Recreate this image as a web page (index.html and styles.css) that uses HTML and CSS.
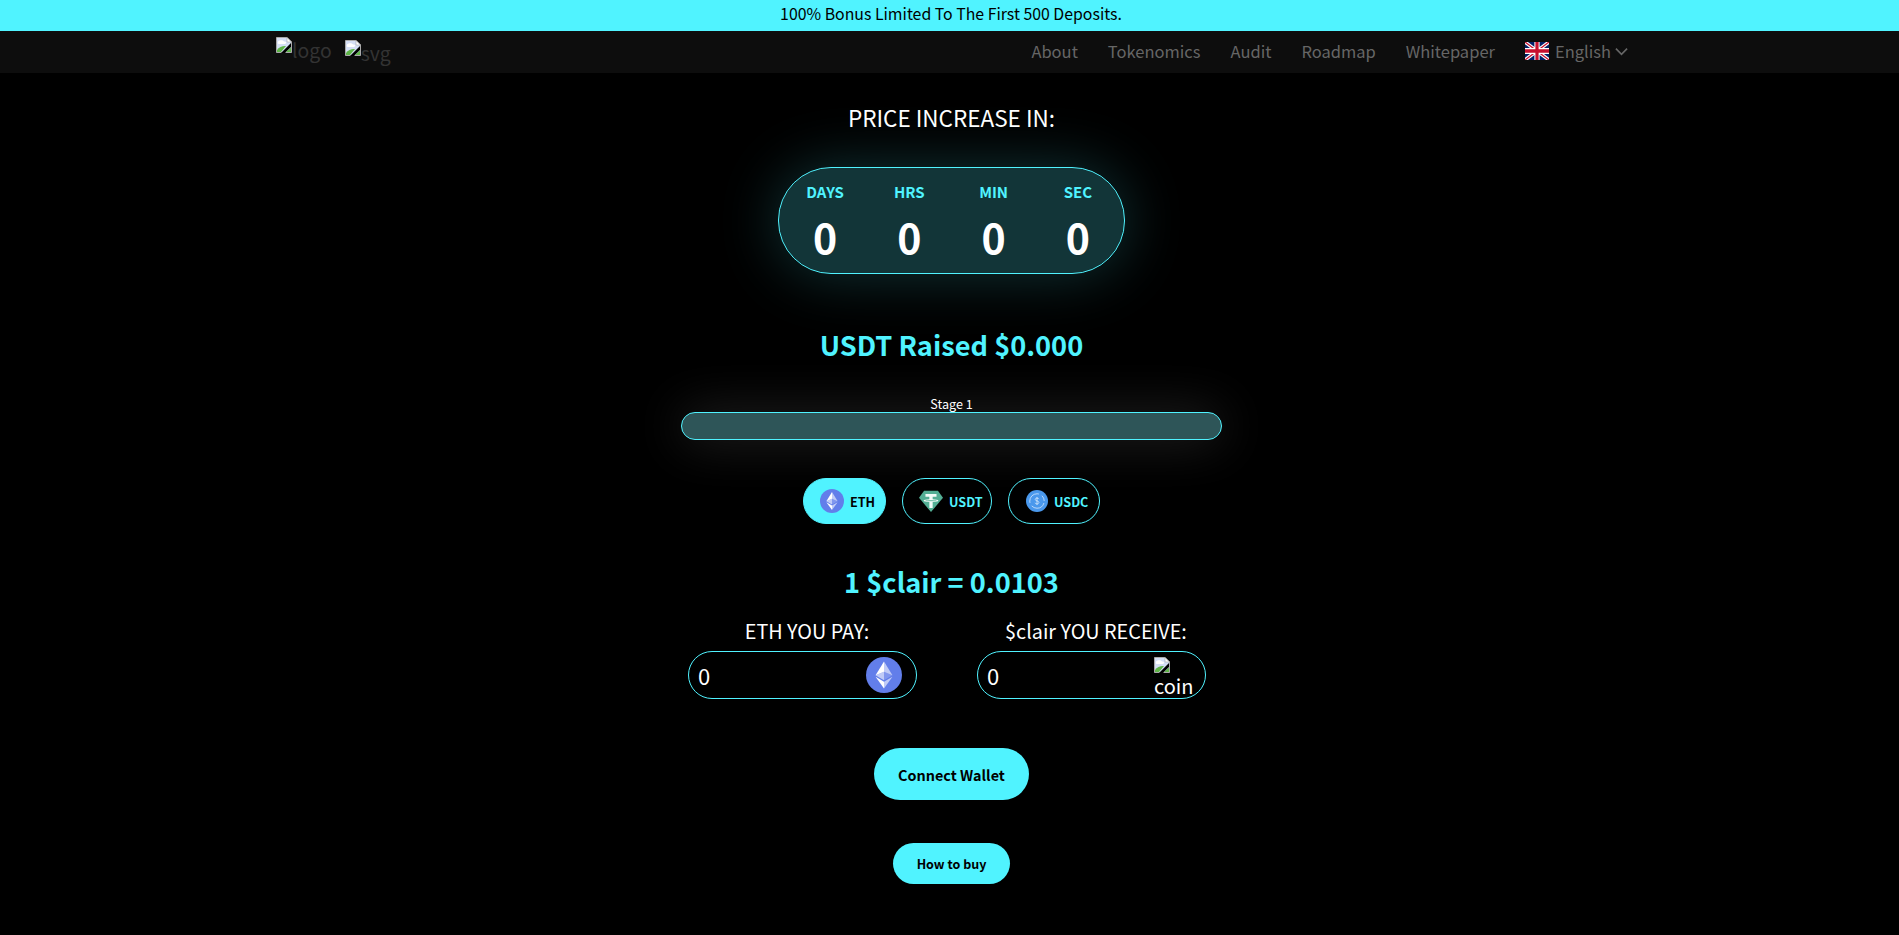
FILE: index.html
```html
<!DOCTYPE html>
<html lang="en">
<head>
<meta charset="utf-8">
<title>$clair Presale</title>
<link rel="stylesheet" href="styles.css">
</head>
<body>
<svg class="defs" width="0" height="0" aria-hidden="true">
  <defs>
    <symbol id="broken" viewBox="0 0 16 16">
      <path d="M0.5 0.5H11L15.5 5V15.5H0.5Z" fill="#d5dff5" stroke="#a9a9a9"/>
      <path d="M11 0.5V5H15.5Z" fill="#fff" stroke="#a9a9a9" stroke-width=".6"/>
      <path d="M2 4.5C4 2.5 7 3 8 4.5C10 4 11 6 9 7H3C1.500 7 1.500 5.500 2 4.500Z" fill="#fff"/>
      <path d="M1 15V13C3 10 7 8.500 10 9L5 15Z" fill="#5fb548"/>
      <path d="M5 16L15 6V10L9 16Z" fill="#000"/>
      <path d="M10 15L15 10.500V15Z" fill="#5fb548"/>
    </symbol>
    <symbol id="eth" viewBox="0 0 32 32">
      <circle cx="16" cy="16" r="16" fill="#627eea"/>
      <path d="M16 4V13L23.500 16.300Z" fill="#fff" fill-opacity=".6"/>
      <path d="M16 4L8.500 16.300L16 13Z" fill="#fff"/>
      <path d="M16 22V28L23.500 17.600Z" fill="#fff" fill-opacity=".6"/>
      <path d="M16 22L8.500 17.600L16 28Z" fill="#fff"/>
      <path d="M16 20.600L23.500 16.300L16 13Z" fill="#fff" fill-opacity=".2"/>
      <path d="M8.500 16.300L16 20.600V13Z" fill="#fff" fill-opacity=".6"/>
    </symbol>
    <symbol id="usdt" viewBox="0 0 26 24">
      <path d="M5.500 1H20.500L26 8.500L13 24L0 8.500Z" fill="#53ae94"/>
      <path d="M7 4.500H19V7.500H14.800V10.200C18 10.400 21 10.900 21 11.600S18 12.800 14.800 13V19.500H11.200V13C8 12.800 5 12.300 5 11.600S8 10.400 11.200 10.200V7.500H7Z" fill="#f2fbf8"/>
      <path d="M6.500 11.600C8 11.200 11 11 13 11S18 11.200 19.500 11.600C18 12 15 12.200 13 12.200S8 12 6.500 11.600Z" fill="#7cc4ae"/>
    </symbol>
    <symbol id="usdc" viewBox="0 0 32 32">
      <circle cx="16" cy="16" r="16" fill="#4a98ec"/>
      <circle cx="16" cy="16" r="10.500" fill="none" stroke="#cfe4fb" stroke-width="1.200" stroke-dasharray="22 5" stroke-dashoffset="-3"/>
      <path d="M18.800 13.300C18.400 12.300 17.400 11.800 16 11.800C14.400 11.800 13.400 12.600 13.400 13.800C13.400 16.500 18.800 15.300 18.800 18.100C18.800 19.400 17.600 20.200 16 20.200C14.400 20.200 13.400 19.600 13.200 18.600M16 10.200V21.800" fill="none" stroke="#dcecfd" stroke-width="1.100"/>
    </symbol>
  </defs>
</svg>

<div class="promo">100% Bonus Limited To The First 500 Deposits.</div>

<header class="nav">
  <div class="brand">
    <span class="broken"><svg class="broken-icon"><use href="#broken"/></svg>logo</span>
    <span class="broken broken-svg"><svg class="broken-icon"><use href="#broken"/></svg>svg</span>
  </div>
  <nav class="links">
    <a>About</a>
    <a>Tokenomics</a>
    <a>Audit</a>
    <a>Roadmap</a>
    <a>Whitepaper</a>
    <span class="lang">
      <svg class="flag" viewBox="0 0 60 40" preserveAspectRatio="none">
        <rect width="60" height="40" fill="#012169"/>
        <path d="M0 0L60 40M60 0L0 40" stroke="#fff" stroke-width="8"/>
        <path d="M0 0L60 40M60 0L0 40" stroke="#c8102e" stroke-width="3"/>
        <path d="M30 0V40M0 20H60" stroke="#fff" stroke-width="13"/>
        <path d="M30 0V40M0 20H60" stroke="#c8102e" stroke-width="8"/>
      </svg>
      English
      <svg class="chev" viewBox="0 0 14 9"><path d="M1 1.500L7 7.500L13 1.500" fill="none" stroke="currentColor" stroke-width="1.800"/></svg>
    </span>
  </nav>
</header>

<main class="sale">
  <h2 class="price-title">PRICE INCREASE IN:</h2>

  <div class="timer">
    <div class="cell"><span class="unit">DAYS</span><span class="num">0</span></div>
    <div class="cell"><span class="unit">HRS</span><span class="num">0</span></div>
    <div class="cell"><span class="unit">MIN</span><span class="num">0</span></div>
    <div class="cell"><span class="unit">SEC</span><span class="num">0</span></div>
  </div>

  <h2 class="raised">USDT Raised $0.000</h2>

  <div class="stage">
    <span class="stage-label">Stage 1</span>
    <div class="bar"></div>
  </div>

  <div class="tabs">
    <button class="tab tab-active tab-eth"><svg class="tab-icon"><use href="#eth"/></svg>ETH</button>
    <button class="tab tab-usdt"><svg class="tab-icon"><use href="#usdt"/></svg>USDT</button>
    <button class="tab tab-usdc"><svg class="tab-icon tab-icon-usdc"><use href="#usdc"/></svg>USDC</button>
  </div>

  <h2 class="rate">1 $clair = 0.0103</h2>

  <div class="fields">
    <div class="field">
      <label class="field-label">ETH YOU PAY:</label>
      <div class="input">
        <span>0</span>
        <svg class="input-icon"><use href="#eth"/></svg>
      </div>
    </div>
    <div class="field">
      <label class="field-label">$clair YOU RECEIVE:</label>
      <div class="input">
        <span>0</span>
        <span class="coin"><svg class="broken-icon"><use href="#broken"/></svg>coin</span>
      </div>
    </div>
  </div>

  <button class="cta cta-connect">Connect Wallet</button>
  <button class="cta cta-how">How to buy</button>
</main>
</body>
</html>
```
FILE: styles.css
```css
* { box-sizing: border-box; }
html, body { margin: 0; padding: 0; }
body {
  height: 935px;
  overflow: hidden;
  background: #000;
  color: #fff;
  font-family: "Noto Sans CJK SC", "Noto Sans", sans-serif;
}
.defs { position: absolute; }

.promo {
  height: 31px;
  padding-left: 3px;
  background: #50f3ff;
  color: #000;
  font-size: 15.85px;
  line-height: 28px;
  text-align: center;
}

.nav {
  height: 42px;
  background: #0d0d0d;
  padding: 0 271px 0 276px;
  display: flex;
  align-items: center;
  justify-content: space-between;
}
.brand { display: flex; gap: 13px; align-self: flex-start; padding-top: 6px; }
.broken {
  display: flex;
  align-items: flex-start;
  font-size: 19.4px;
  line-height: 26px;
  color: #333;
}
.broken-svg { padding-top: 3px; }
.broken-icon { width: 16px; height: 16px; flex: none; display: block; }

.links {
  display: flex;
  align-items: center;
  gap: 30px;
  font-size: 16.5px;
  line-height: 24px;
  padding-bottom: 2px;
  color: #666;
}
.lang { display: flex; align-items: center; }
.flag { width: 24px; height: 18px; margin-right: 6px; }
.chev { width: 13px; height: 9px; margin-left: 4px; }

.sale {
  display: flex;
  flex-direction: column;
  align-items: center;
  padding-left: 4px;
}
h2 { margin: 0; }
.price-title {
  margin-top: 27px;
  font-size: 22.5px;
  font-weight: 400;
  line-height: 34px;
}
.timer {
  margin-top: 33px;
  width: 347px;
  height: 107px;
  padding: 0 4px;
  display: grid;
  grid-template-columns: repeat(4, 1fr);
  align-items: start;
  border: 1px solid #50f3ff;
  border-radius: 53px;
  background: rgba(80, 243, 255, .22);
  box-shadow: 0 0 60px rgba(80, 243, 255, .22);
  text-align: center;
}
.cell { display: flex; flex-direction: column; align-items: center; }
.unit {
  margin-top: 12px;
  color: #50f3ff;
  font-size: 15px;
  font-weight: 700;
  line-height: 24px;
}
.num {
  margin-top: 8px;
  font-size: 41px;
  font-weight: 700;
  line-height: 48px;
}
.raised {
  margin-top: 48px;
  color: #50f3ff;
  font-size: 27.2px;
  font-weight: 700;
  line-height: 44px;
}
.stage { margin-top: 29px; display: flex; flex-direction: column; align-items: center; }
.stage-label { font-size: 12.6px; line-height: 18px; margin-bottom: -1px; }
.bar {
  width: 541px;
  height: 28px;
  border: 1px solid #50f3ff;
  border-radius: 14px;
  background: #2e5558;
  box-shadow: 0 0 50px rgba(255, 255, 255, .16);
}
.tabs { margin-top: 38px; display: flex; gap: 16px; }
.tab {
  height: 46px;
  border: 1px solid #50f3ff;
  border-radius: 23px;
  background: #000;
  color: #50f3ff;
  font-family: inherit;
  font-size: 12.6px;
  font-weight: 700;
  display: flex;
  align-items: center;
  padding: 0;
}
.tab-active { background: #50f3ff; color: #000; }
.tab-eth { width: 83px; padding-left: 16px; }
.tab-usdt { width: 90px; padding-left: 16px; }
.tab-usdc { width: 92px; padding-left: 17px; }
.tab-icon { width: 24px; height: 24px; margin-right: 6px; }
.tab-icon-usdc { width: 22px; height: 22px; margin-right: 6px; }

.rate {
  margin-top: 35px;
  color: #50f3ff;
  font-size: 27.2px;
  font-weight: 700;
  line-height: 44px;
}
.fields { margin-top: 12px; display: flex; gap: 51px; }
.field { display: flex; flex-direction: column; align-items: center; width: 238px; }
.field-label { font-size: 19.8px; line-height: 32px; }
.input {
  margin-top: 4px;
  align-self: flex-start;
  width: 229px;
  height: 48px;
  border: 1px solid #50f3ff;
  border-radius: 24px;
  padding: 0 14px 0 9px;
  display: flex;
  align-items: center;
  justify-content: space-between;
  font-size: 22px;
}
.input-icon { width: 36px; height: 36px; }
.coin {
  width: 37px;
  align-self: flex-start;
  margin-top: 5px;
  font-size: 20px;
  line-height: 26px;
}
.cta {
  border: 0;
  background: #50f3ff;
  color: #000;
  font-family: inherit;
  font-weight: 700;
  padding: 0;
}
.cta-connect {
  margin-top: 49px;
  width: 155px;
  height: 52px;
  border-radius: 26px;
  font-size: 14.4px;
}
.cta-how {
  margin-top: 43px;
  width: 117px;
  height: 41px;
  border-radius: 21px;
  font-size: 12.5px;
}
```
